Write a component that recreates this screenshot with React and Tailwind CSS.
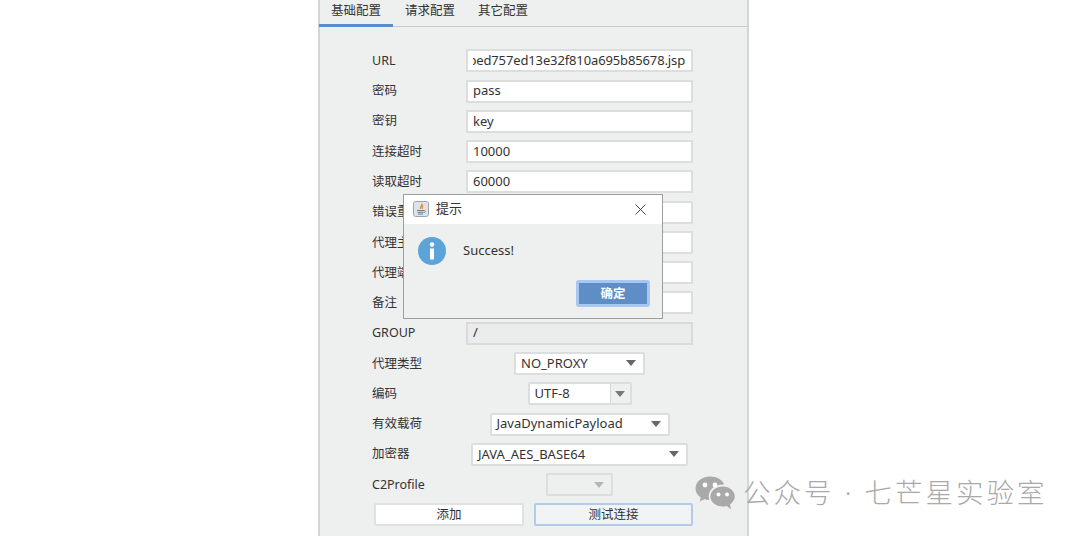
import React from "react";

const FONT = "[font-family:'Noto_Sans','Noto_Sans_CJK_SC',sans-serif]";

function Caret({ className = "" }) {
  return (
    <svg width="10" height="6" viewBox="0 0 10 6" className={className}>
      <path d="M0 0H10L5 6Z" fill="currentColor" />
    </svg>
  );
}

function Row({ label, children }) {
  return (
    <div className="flex h-[30.27px] items-center">
      <div className="w-[94px] shrink-0 pt-[1px] text-[12.5px] text-[#333]">{label}</div>
      <div className="flex w-[227px] justify-center">{children}</div>
    </div>
  );
}

function Input({ value, disabled, clip }) {
  return (
    <div
      className={`flex h-[23px] w-[227px] items-center border-2 pr-[6px] pl-[5px] text-[13px] text-[#333] ${
        disabled ? "border-[#d9dada] bg-[#ebecec]" : "border-[#dcdddd] bg-white"
      }`}
    >
      <div className={`flex w-full overflow-hidden ${clip ? "justify-end tracking-[-0.13px]" : ""}`}>
        <span className="whitespace-nowrap">{value}</span>
      </div>
    </div>
  );
}

function Combo({ value, width, split, disabled }) {
  return (
    <div
      className={`flex h-[23px] items-center rounded-[2px] border-2 text-[13px] text-[#333] ${width} ${
        disabled ? "border-[#dcdddd] bg-[#eeefef]" : "border-[#dcdddd] bg-white"
      }`}
    >
      <span className="flex-1 pl-[5px] whitespace-nowrap">{value}</span>
      {split ? (
        <span className="flex h-full w-[20px] items-center justify-center border-l border-[#d5d6d6] bg-[#eeefef] text-[#777]">
          <Caret />
        </span>
      ) : (
        <span className={`flex w-[24px] justify-center ${disabled ? "text-[#b5b6b6]" : "text-[#666]"}`}>
          <Caret />
        </span>
      )}
    </div>
  );
}

function JavaIcon() {
  return (
    <svg width="16" height="16" viewBox="0 0 16 16" className="rounded-[2px]">
      <rect x="0.5" y="0.5" width="15" height="15" rx="2" fill="#dfe3e8" stroke="#9aa2ad" />
      <path d="M8.8 2.5C10 4.5 6.5 5.5 7.5 8M10 4.5C8.8 5.5 8.8 6.5 9.5 8" stroke="#e08a3c" strokeWidth="1.3" fill="none" />
      <path d="M4 9.5H11M4.5 11.2H10.5M5 13H10" stroke="#6f7f96" strokeWidth="1.1" />
      <path d="M11 9.5C13 9.5 13 11.5 10.5 11.5" stroke="#6f7f96" strokeWidth="0.8" fill="none" />
    </svg>
  );
}

function WeChat() {
  return (
    <svg width="40" height="34" viewBox="0 0 40 34">
      <path d="M15 0.5C6.9 0.5 0.5 5.8 0.5 12.4C0.5 16.1 2.5 19.3 5.8 21.5L4.5 25.6L9.4 23.2C11 23.7 12.6 24 14.4 24.1C13.9 22.8 13.7 21.5 13.7 20.2C13.7 13.6 19.9 8.5 27.9 8.5L29.2 8.6C27.6 3.9 21.9 0.5 15 0.5Z" fill="#a9a9a9" />
      <circle cx="10" cy="9" r="2.4" fill="#fff" />
      <circle cx="20" cy="9" r="2.4" fill="#fff" />
      <path d="M27.8 10.5C20.8 10.5 15.4 15 15.4 20.5C15.4 26 20.8 30.5 27.8 30.5C29.2 30.5 30.6 30.3 31.9 29.9L36 33.5L35 28.4C37.9 26.4 39.8 23.6 39.8 20.5C39.8 15 34.6 10.5 27.8 10.5Z" fill="#a9a9a9" />
      <circle cx="23.5" cy="18.5" r="2" fill="#fff" />
      <circle cx="32" cy="18.5" r="2" fill="#fff" />
    </svg>
  );
}

export default function App() {
  return (
    <div className={`relative h-[536px] w-[1080px] overflow-hidden bg-white ${FONT}`}>
      <div className="ml-[318px] flex h-[536px] w-[431px] flex-col border-x-2 border-[#d4d5d5] bg-[#eeefef]">
        <div className="flex h-[27px] shrink-0 border-b border-[#c9caca] text-[12.5px] text-[#333]">
          <div className="-ml-[1px] flex h-[27px] w-[74px] justify-center border-b-[3px] border-[#5b8ccb] pt-[2px]">基础配置</div>
          <div className="flex h-[26px] w-[74px] justify-center pt-[2px]">请求配置</div>
          <div className="flex h-[26px] w-[72px] justify-center pt-[2px]">其它配置</div>
        </div>
        <div className="pt-[18.7px] pl-[52px]">
          <Row label="URL"><Input value="bed757ed13e32f810a695b85678.jsp" clip /></Row>
          <Row label="密码"><Input value="pass" /></Row>
          <Row label="密钥"><Input value="key" /></Row>
          <Row label="连接超时"><Input value="10000" /></Row>
          <Row label="读取超时"><Input value="60000" /></Row>
          <Row label="错误重试"><Input value="" /></Row>
          <Row label="代理主机"><Input value="" /></Row>
          <Row label="代理端口"><Input value="" /></Row>
          <Row label="备注"><Input value="" /></Row>
          <Row label="GROUP"><Input value="/" disabled /></Row>
          <Row label="代理类型"><Combo value="NO_PROXY" width="w-[131px]" /></Row>
          <Row label="编码"><Combo value="UTF-8" width="w-[104px]" split /></Row>
          <Row label="有效载荷"><Combo value="JavaDynamicPayload" width="w-[180px]" /></Row>
          <Row label="加密器"><Combo value="JAVA_AES_BASE64" width="w-[217px]" /></Row>
          <Row label="C2Profile"><Combo value="" width="w-[67px]" disabled /></Row>
          <div className="flex h-[30.27px] items-center pl-[2px]">
            <button className="h-[23px] w-[150px] rounded-[2px] border-2 border-[#e0e1e1] bg-white pt-[1px] text-[12.5px] text-[#333]">添加</button>
            <button className="ml-[10px] h-[23px] w-[159px] rounded-[2px] border-2 border-[#b4cbe8] bg-[#f1f3f5] pt-[1px] text-[12.5px] text-[#333]">测试连接</button>
          </div>
        </div>
      </div>

      <div className="absolute top-[194px] left-[403px] h-[125px] w-[260px] border border-[#9c9d9d] bg-[#eeefef]">
        <div className="flex h-[29px] items-center bg-white pb-[1px] pl-[9px]">
          <JavaIcon />
          <span className="ml-[7px] text-[13px] text-[#333]">提示</span>
          <svg width="11" height="11" viewBox="0 0 11 11" className="ml-[173px]">
            <path d="M0.5 0.5L10.5 10.5M10.5 0.5L0.5 10.5" stroke="#444" strokeWidth="1" />
          </svg>
        </div>
        <div className="flex h-[41px] pt-[13px] pl-[14px]">
          <svg width="28" height="28" viewBox="0 0 28 28">
            <circle cx="14" cy="14" r="14" fill="#5ba4d7" />
            <circle cx="14" cy="7.5" r="2.3" fill="#fff" />
            <rect x="12" y="11.5" width="4" height="11" fill="#fff" />
          </svg>
          <span className="ml-[17px] pt-[5px] text-[13px] leading-[17px] text-[#333]">Success!</span>
        </div>
        <div className="flex justify-end pt-[15px] pr-[12px]">
          <button className="h-[27px] w-[74px] rounded-[3px] border-[3px] border-[#a8c6f2] bg-[#5f8dc6] pt-[1px] text-[12.5px] font-bold text-white">确定</button>
        </div>
      </div>

      <div className="absolute top-[475px] left-[695px] flex items-center">
        <WeChat />
        <span className="ml-[8px] text-[27.5px] leading-[36px] font-light tracking-[3px] whitespace-nowrap text-[#a9a9a9]">公众号 · 七芒星实验室</span>
      </div>
    </div>
  );
}
